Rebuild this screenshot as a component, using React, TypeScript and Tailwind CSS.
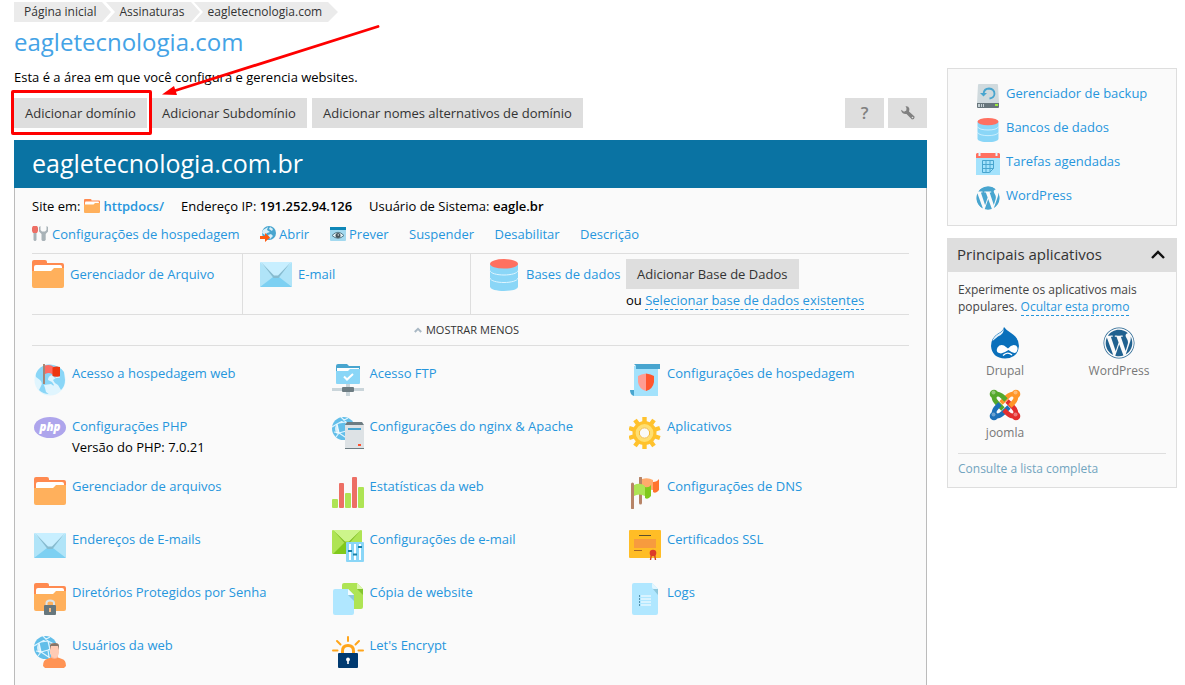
import type { ReactNode } from "react";
import { FaWordpress } from "react-icons/fa";

type IconProps = { className?: string };

function Svg({ children, className = "size-8" }: IconProps & { children: ReactNode }) {
  return (
    <svg viewBox="0 0 32 32" className={`shrink-0 ${className}`}>
      {children}
    </svg>
  );
}

const folderShapes = (
  <>
    <path d="M0 2Q0 0 2 0H13Q15 0 15 2V3H30Q32 3 32 5V14H0Z" fill="#ff8a50" />
    <path d="M2 7Q2 5 4 5H28Q30 5 30 7V12H2Z" fill="#fff" />
    <path d="M0 11H19L22 8H32V26Q32 28 30 28H2Q0 28 0 26Z" fill="#ffb05c" />
  </>
);

const FolderIcon = ({ className }: IconProps) => <Svg className={className}>{folderShapes}</Svg>;

const MailIcon = ({ className }: IconProps) => (
  <Svg className={className}>
    <rect y="3" width="32" height="25" rx="1" fill="#b0e4f8" />
    <path d="M0 3H32L17.500 19H14.500Z" fill="#c8efff" />
    <path d="M0 28L13 18H19L32 28Z" fill="#7dd0f2" />
    <path d="M1 3L14 16.500H18L31 3L18.500 19H13.500Z" fill="#87bcd0" />
  </Svg>
);

const DatabaseIcon = ({ className }: IconProps) => (
  <Svg className={className}>
    <path d="M2 5V27.500C2 33.500 30 33.500 30 27.500V5Z" fill="#8ad6f7" />
    <path d="M2 11.500C3 17.500 29 17.500 30 11.500M2 19C3 25 29 25 30 19" stroke="#dff5ff" strokeWidth="1" fill="none" />
    <ellipse cx="16" cy="4.800" rx="14" ry="4.800" fill="#ff7060" />
  </Svg>
);

const GlobeFlagIcon = () => (
  <Svg>
    <circle cx="16" cy="16" r="15.500" fill="#e0f5fe" />
    <path d="M4 6Q9 0 16 .5Q25 1 30 8L31 16Q31 22 27 26L24 21Q20 19 19 16Q22 13 26 14L24 11L21 14L18 11Q14 12 14 16L18 18L20 21L17 24L15 30Q9 30 5 26L7 22Q9 19 6 16L2 13Q1 10 4 6Z" fill="#8ad6f7" />
    <path d="M10 21L17 20L21 23L18 27L16 31L12 28L11 24Z" fill="#e0f5fe" />
    <path d="M11 1.500Q16 0 20 3L26 3V12Q21 14 18 10Q15 8 11 10Z" fill="#ff6b62" />
    <path d="M18.500 3.500Q22 2 26 3V12Q22 13 18.500 12Z" fill="#ed3711" />
    <path d="M10 0V20" stroke="#a77d68" strokeWidth="1.800" />
  </Svg>
);

const PhpIcon = () => (
  <Svg>
    <ellipse cx="16" cy="10.500" rx="16" ry="10.500" fill="#aea5ec" />
    <text x="16" y="13.500" textAnchor="middle" fill="#fff" fontFamily="Open Sans, sans-serif" fontSize="11.500" fontWeight="800" fontStyle="italic">
      php
    </text>
  </Svg>
);

const FolderLockIcon = () => (
  <Svg>
    {folderShapes}
    <path d="M12.500 23V20Q12.500 17.500 16 17.500Q20 17.500 20 20V23" stroke="#dce3e6" strokeWidth="2" fill="none" />
    <rect x="10" y="22" width="12" height="10" rx="1" fill="#67777d" />
    <path d="M15 25H17V29H15Z" fill="#f7bb83" />
  </Svg>
);

const netGlobe = (
  <>
    <circle cx="11.500" cy="11.500" r="11.500" fill="#62bee9" />
    <path d="M5 7L16 1M5 7L7 16L14 14L22 9M7 6L14 5L22 9M14 5L17 18M7 16L4 20M7 16L16 22M14 14L15 21M5 7L0 10M2 15L7 16M14 5L9 0" stroke="#dff5ff" strokeWidth="1.200" fill="none" />
    <path d="M5 7L7 16L5 17Q1 12 5 7Z" fill="#fff" opacity=".75" />
  </>
);

const WebUserIcon = () => (
  <Svg>
    {netGlobe}
    <path d="M17 15H24V23H17Z" fill="#ffb899" />
    <path d="M16 9Q16 7 20 7Q25 7 25 10V17Q24 22 20.500 22Q17 21 16 17Z" fill="#ffcbb4" />
    <path d="M16 14V9Q17 7 21 7Q25 7 25 10V14L24 10H17Z" fill="#85766b" />
    <path d="M9 30Q9 24 13 23L17 21.500Q20.500 24 24 21.500L28 23Q32 24 32 30L30 32H11Z" fill="#ff9354" />
  </Svg>
);

const FtpIcon = () => (
  <Svg>
    <path d="M4 2Q4 0 6 0H15L17 2H28V9H4Z" fill="#48a5cf" />
    <path d="M5 4H27V9H5Z" fill="#fff" />
    <path d="M4 7H16L18 5H28V19Q28 20 27 20H5Q4 20 4 19Z" fill="#8ad6f7" />
    <path d="M12 12.500L15 15.500L21 10" stroke="#fff" strokeWidth="2" fill="none" />
    <path d="M14 20H18V32H14ZM0 24H32V27H0Z" fill="#cad5da" />
    <rect x="10" y="23" width="12" height="5" rx="1" fill="#6d7c82" />
  </Svg>
);

const ServerGlobeIcon = () => (
  <Svg>
    {netGlobe}
    <path d="M13 8L15 5H30L32 8V32H13Z" fill="#6d7c82" />
    <path d="M13 8H32V31H13Z" fill="#dde2e5" />
    <path d="M16 11H29V13H16Z" fill="#48a5cf" />
    <path d="M26 27H29V29H26Z" fill="#ff512f" />
  </Svg>
);

const StatsIcon = () => (
  <Svg>
    <rect y="22" width="6" height="9" rx="1" fill="#aee454" />
    <rect x="7" y="6" width="5" height="25" rx="1" fill="#ed6f65" />
    <rect x="13" y="16" width="6" height="15" rx="1" fill="#aee454" />
    <rect x="20" width="5" height="31" rx="1" fill="#ed6f65" />
    <rect x="26" y="10" width="6" height="21" rx="1" fill="#aee454" />
  </Svg>
);

const MailSettingsIcon = () => (
  <Svg>
    <rect width="30" height="24" rx="1" fill="#aee454" />
    <path d="M1 0H29L18 11H12Z" fill="#cdf58b" />
    <path d="M1 24L12 13H18L29 24Z" fill="#80c91c" />
    <path d="M1 0L13.500 12H16.500L29 0L17 13.500H13Z" fill="#82bd29" />
    <rect x="14" y="12" width="18" height="20" rx="1" fill="#8ad6f7" />
    <path d="M18 14V30M23 14V30M28 14V30" stroke="#fff" strokeWidth="2" />
    <path d="M16 21H20M21 24.500H25M26 17H30" stroke="#1781a9" strokeWidth="2" />
  </Svg>
);

const CopyIcon = () => (
  <Svg>
    <path d="M10 2Q10 0 12 0H25L31 6V24Q31 26 29 26H12Q10 26 10 24Z" fill="#aee454" />
    <path d="M25 0L31 6H25Z" fill="#dcf7ae" />
    <path d="M25 6H31V12Z" fill="#83c62e" />
    <path d="M1 8Q1 6 3 6H16L22 12V30Q22 32 20 32H3Q1 32 1 30Z" fill="#b0e7ff" />
    <path d="M16 6L22 12H16Z" fill="#f2fbff" />
    <path d="M16 12H22V18Z" fill="#8cc7dc" />
  </Svg>
);

const EncryptIcon = () => (
  <Svg>
    <path d="M10.500 18V15Q10.500 9.500 16 9.500Q21.500 9.500 21.500 15V18" stroke="#ffa51b" strokeWidth="3" fill="none" />
    <path d="M16 1V5M5 5L8.500 8.500M27 5L23.500 8.500M1 14.500H5.500M26.500 14.500H31" stroke="#ffa51b" strokeWidth="2" strokeLinecap="round" />
    <rect x="6" y="17" width="20" height="15" rx="1" fill="#003a70" />
    <circle cx="16" cy="23.500" r="1.900" fill="#fff" />
    <path d="M15.200 24H16.800V28H15.200Z" fill="#fff" />
  </Svg>
);

const ScrollIcon = () => (
  <Svg>
    <path d="M5 2H29V32H5Z" fill="#a3e2fc" />
    <path d="M5 0H31V5H7V2Z" fill="#48a5cf" />
    <path d="M1 26H5V32Q1 31 1 26Z" fill="#48a5cf" />
    <path d="M17 9.500Q12 10 9 12V18Q10 25 17 27Z" fill="#ff9d93" />
    <path d="M17 9.500Q22 10 25 12V18Q24 25 17 27Z" fill="#ff562e" />
  </Svg>
);

const GearIcon = () => (
  <Svg>
    <path
      d="M15.500 0V32M0.100 11L30.900 21M0.100 21L30.900 11M6 3L25 29M25 3L6 29"
      stroke="#ffc22d"
      strokeWidth="4.400"
    />
    <circle cx="15.500" cy="16" r="12" fill="#ffc22d" />
    <circle cx="15.500" cy="16" r="7.300" fill="#fafafa" stroke="#ffdf70" strokeWidth="3.200" />
    <circle cx="15.500" cy="16" r="5.200" fill="#fafafa" stroke="#f5b629" strokeWidth="1" />
  </Svg>
);

const FlagsIcon = () => (
  <Svg>
    <path d="M11.500 1V26" stroke="#b78467" strokeWidth="3" strokeLinecap="round" />
    <path d="M13 2Q19 0 24 3V13Q18 13 13 9Z" fill="#ffab6c" />
    <path d="M24 5Q28 5 30 2V13Q27 17 24 15Z" fill="#ff742d" />
    <path d="M5 8Q11 5 16 9V19Q10 16 5 19Z" fill="#aee454" />
    <path d="M16 10Q20 11 22 8V19Q19 23 16 21Z" fill="#80c91c" />
    <path d="M3.500 7V31" stroke="#b78467" strokeWidth="3" strokeLinecap="round" />
  </Svg>
);

const CertificateIcon = () => (
  <Svg>
    <rect width="32" height="28" rx="1" fill="#ffbd26" />
    <path d="M10 5.500H22" stroke="#5d512c" strokeWidth="1" />
    <path d="M5 9H27V18H5Z" fill="#f79b3e" />
    <path d="M5 20.500H13" stroke="#a46426" strokeWidth="1" />
    <path d="M22.500 24L21.500 30M25.500 24L26.500 30" stroke="#d04026" strokeWidth="1.400" />
    <circle cx="24" cy="23" r="3.300" fill="#dd3b28" />
  </Svg>
);

const LogsIcon = () => (
  <Svg>
    <path d="M3 2Q3 0 5 0H23L29 6V30Q29 32 27 32H5Q3 32 3 30Z" fill="#b0e7ff" />
    <path d="M23 0L29 6H25Q23 6 23 4Z" fill="#e2f6ff" />
    <path d="M24 6H29V12Z" fill="#8cc7dc" />
    <path d="M12 13H22M12 16H22M12 19H22M12 22H22" stroke="#e5f7ff" strokeWidth="1.600" />
    <path d="M10.500 12V23" stroke="#5191ad" strokeWidth="1" strokeDasharray="2 1" />
  </Svg>
);

const BackupIcon = () => (
  <svg viewBox="0 0 24 24" className="size-6 shrink-0">
    <path d="M2 1Q2 0 3 0H21Q22 0 22 1L23 19H1Z" fill="#d0dade" />
    <path d="M1 19H23V23Q23 24 22 24H2Q1 24 1 23Z" fill="#68767c" />
    <path d="M7.500 10Q8 4.500 13 4.500Q18.500 5 18.500 10Q18 14 13.500 14.500" stroke="#48a5cf" strokeWidth="1.800" fill="none" />
    <path d="M4 9H11L7.500 12.500Z" fill="#48a5cf" />
    <path d="M2 20H4V23H2ZM5 20H6V23H5ZM7 20H8V23H7Z" fill="#c5d0d4" />
    <rect x="19" y="20" width="3" height="2" fill="#9bec3d" />
  </svg>
);

const CalendarIcon = () => (
  <svg viewBox="0 0 24 24" className="size-6 shrink-0">
    <path d="M0 2H24V23H0Z" fill="#a3e2fc" />
    <path d="M1 1H23L24 2V6H0V2Z" fill="#ff7060" />
    <path d="M3.500 0V4M20.500 0V4" stroke="#e2f6ff" strokeWidth="2" />
    <path d="M6.500 8.500H17.500V16.500L13.500 20.500H6.500ZM10 8.500V20.500M14 8.500V20.500M6.500 12.500H17.500M6.500 16.500H17.500" stroke="#48a5cf" strokeWidth="1" fill="none" />
  </svg>
);

const WordPressBadge = () => (
  <span className="flex size-6 shrink-0 items-center justify-center overflow-hidden rounded-full text-[#48a5cf]">
    <FaWordpress className="size-7 shrink-0" />
  </span>
);

const ToolsIcon = () => (
  <svg viewBox="0 0 16 16" className="size-4 shrink-0">
    <path d="M0 1.500L1 0H5L6 1.500V5L5 7H1L0 5Z" fill="#ed6f65" />
    <path d="M1.500 7H4.500V14L3.500 15H2.500L1.500 14Z" fill="#a8b2b7" />
    <path d="M7 1L8.500 0V4L10 5.500H13L14.500 4V0L16 1V5.500L13.700 8V14L12.500 15H10.500L9.500 14V8L7 5.500Z" fill="#a8b2b7" />
  </svg>
);

const OpenIcon = () => (
  <svg viewBox="0 0 16 16" className="size-4 shrink-0">
    <circle cx="9" cy="7" r="7" fill="#48a5cf" />
    <path d="M3 4L8 1L7 4L10 6L7 7L5 9L2 7ZM10 1L13 3L12 5L9 3ZM8 9L11 8L13 10L10 13Z" fill="#d9f0f9" />
    <path d="M0 10H5V7L10 11.500L5 16V13H0Z" fill="#ff5b10" />
  </svg>
);

const PreviewIcon = () => (
  <svg viewBox="0 0 16 16" className="size-4 shrink-0">
    <rect y="1" width="16" height="14" rx="1" fill="#a3d9ef" />
    <path d="M0 1H16V4H0Z" fill="#0e86b7" />
    <path d="M2 9.500Q8 3 14 9.500Q8 15 2 9.500Z" fill="#e6f4f8" stroke="#557a89" strokeWidth="1" />
    <circle cx="8" cy="9.500" r="2.500" fill="#45545b" />
    <circle cx="8.300" cy="8.900" r=".7" fill="#fff" />
  </svg>
);

const DrupalIcon = () => (
  <svg viewBox="0 0 32 32" className="size-8">
    <path d="M15 0Q17 3 22 6Q30 11 30 19Q29 31 16 31.500Q3 31 2 19Q2 11 9 6.500Q14 4 15 0Z" fill="#0a70bb" />
    <path d="M14.500 1.500Q15.500 7 9 9.500L3.500 14Q5 9 10 6.500Q14 4.500 14.500 1.500Z" fill="#e6f2fa" />
    <path d="M8.500 20.500Q11 17 15 18.500L19 21.500Q23 16.500 27 18.500Q30 21 27.500 25Q25 27.500 19.500 23Q16 25.500 12 26.500Q6 26 8.500 20.500Z" fill="#fff" />
    <path d="M14 28.500Q18.500 24 23 28" stroke="#fff" strokeWidth="1.400" fill="none" />
  </svg>
);

const JoomlaIcon = () => (
  <svg viewBox="0 0 32 32" className="size-8">
    <g fill="none" strokeWidth="4.600" strokeLinejoin="round">
      <path d="M5 6V8Q5 11 8 14L14 20" stroke="#54a82c" />
      <path d="M27 5H24Q21 5 18 8L12 14" stroke="#ff9528" />
      <path d="M27 27V24Q27 21 24 18L18 12" stroke="#e32e2d" />
      <path d="M5 27H8Q11 27 14 24L20 18" stroke="#1c70b8" />
      <path d="M5 5H8Q11 5 14 8L17 11" stroke="#54a82c" />
      <path d="M27 5V8Q27 11 24 14L21 17" stroke="#ff9528" />
      <path d="M27 27H24Q21 27 18 24L15 21" stroke="#e32e2d" />
      <path d="M5 27V24Q5 21 8 18L11 15" stroke="#1c70b8" />
    </g>
    <circle cx="5" cy="5" r="4.300" fill="#54a82c" />
    <circle cx="27" cy="5" r="4.300" fill="#ff9528" />
    <circle cx="27" cy="27" r="4.300" fill="#e32e2d" />
    <circle cx="5" cy="27" r="4.300" fill="#1c70b8" />
    <g fill="#fff" opacity=".35">
      <circle cx="4.500" cy="3.500" r="2" />
      <circle cx="26.500" cy="3.500" r="2" />
      <circle cx="26.500" cy="25.500" r="2" />
      <circle cx="4.500" cy="25.500" r="2" />
    </g>
  </svg>
);

type Feature = { icon: ReactNode; label: string; note?: string };

const features: Feature[][] = [
  [
    { icon: <GlobeFlagIcon />, label: "Acesso a hospedagem web" },
    { icon: <PhpIcon />, label: "Configurações PHP", note: "Versão do PHP: 7.0.21" },
    { icon: <FolderIcon />, label: "Gerenciador de arquivos" },
    { icon: <MailIcon />, label: "Endereços de E-mails" },
    { icon: <FolderLockIcon />, label: "Diretórios Protegidos por Senha" },
    { icon: <WebUserIcon />, label: "Usuários da web" },
  ],
  [
    { icon: <FtpIcon />, label: "Acesso FTP" },
    { icon: <ServerGlobeIcon />, label: "Configurações do nginx & Apache" },
    { icon: <StatsIcon />, label: "Estatísticas da web" },
    { icon: <MailSettingsIcon />, label: "Configurações de e-mail" },
    { icon: <CopyIcon />, label: "Cópia de website" },
    { icon: <EncryptIcon />, label: "Let's Encrypt" },
  ],
  [
    { icon: <ScrollIcon />, label: "Configurações de hospedagem" },
    { icon: <GearIcon />, label: "Aplicativos" },
    { icon: <FlagsIcon />, label: "Configurações de DNS" },
    { icon: <CertificateIcon />, label: "Certificados SSL" },
    { icon: <LogsIcon />, label: "Logs" },
  ],
];

const shortcuts: Feature[] = [
  { icon: <BackupIcon />, label: "Gerenciador de backup" },
  { icon: <DatabaseIcon className="size-6" />, label: "Bancos de dados" },
  { icon: <CalendarIcon />, label: "Tarefas agendadas" },
  { icon: <WordPressBadge />, label: "WordPress" },
];

const Link = ({ children, className = "" }: { children: ReactNode; className?: string }) => (
  <a href="#" className={`text-[#2696dd] ${className}`}>
    {children}
  </a>
);

const Button = ({ children, className = "" }: { children: ReactNode; className?: string }) => (
  <button className={`h-[30px] bg-[#dedede] text-left pl-[11px] text-[#333] ${className}`}>{children}</button>
);

function Breadcrumbs() {
  return (
    <nav className="flex h-5 text-xs leading-5 text-[#333]">
      <a className="w-[97px] bg-[#ebebeb] pl-2.5 [clip-path:polygon(0_0,88px_0,97px_50%,88px_100%,0_100%)]">Página inicial</a>
      <a className="-ml-[5px] w-[94px] bg-[#ebebeb] pl-[13.5px] [clip-path:polygon(0_0,85px_0,94px_50%,85px_100%,0_100%,9px_50%)]">Assinaturas</a>
      <a className="-ml-[6px] w-[144px] bg-[#ebebeb] pl-[13.5px] [clip-path:polygon(0_0,134px_0,144px_50%,134px_100%,0_100%,9px_50%)]">eagletecnologia.com</a>
    </nav>
  );
}

function DomainPanel() {
  return (
    <section className="mt-3 h-[545px]">
      <h2 className="h-12 bg-[#0a73a3] pl-[18px] text-[25px] leading-[46px] text-white">eagletecnologia.com.br</h2>
      <div className="h-[497px] border-x border-[#bbb] bg-[#fafafa] px-[17px] pt-2">
        <div className="flex h-5 items-center leading-5 text-black">
          <span className="flex w-[149px] items-center">
            Site em:
            <FolderIcon className="ml-1 mr-[3px] mt-px size-4" />
            <Link className="font-semibold">httpdocs/</Link>
          </span>
          <span className="w-[188px]">
            Endereço IP: <b className="font-semibold">191.252.94.126</b>
          </span>
          <span>
            Usuário de Sistema: <b className="font-semibold">eagle.br</b>
          </span>
        </div>
        <div className="mt-2 flex h-5 items-center leading-5">
          <Link className="flex w-[228px] items-center gap-1"><ToolsIcon />Configurações de hospedagem</Link>
          <Link className="flex w-[70px] items-center gap-[3px]"><OpenIcon />Abrir</Link>
          <Link className="flex w-[79px] items-center gap-[3px]"><PreviewIcon />Prever</Link>
          <Link className="w-[85.5px]">Suspender</Link>
          <Link className="w-[85.5px]">Desabilitar</Link>
          <Link>Descrição</Link>
        </div>

        <div className="mt-[9px] flex h-[62px] border-y border-[#dedede] leading-5">
          <div className="flex w-[211px] gap-1.5 border-r border-[#dedede]">
            <FolderIcon className="mt-1.5 size-8" />
            <Link className="mt-2.5">Gerenciador de Arquivo</Link>
          </div>
          <div className="flex w-[228px] gap-1.5 border-r border-[#dedede] pl-[17px]">
            <MailIcon className="mt-[5px] size-8" />
            <Link className="mt-2.5">E-mail</Link>
          </div>
          <div className="flex gap-1.5 whitespace-nowrap pl-[17px]">
            <DatabaseIcon className="mt-[5px] size-8" />
            <Link className="mt-2.5 w-[94px]">Bases de dados</Link>
            <div className="text-black">
              <Button className="mt-[5px] block w-[173px]">Adicionar Base de Dados</Button>
              <div className="mt-px">
                ou <Link className="border-b border-dashed border-[#2696dd]">Selecionar base de dados existentes</Link>
              </div>
            </div>
          </div>
        </div>

        <div className="flex h-[31px] items-center justify-center border-b border-[#dedede] pr-[8px] text-[11px] font-medium tracking-[0.03px] text-[#333]">
          <svg viewBox="0 0 8 6" className="mr-1 h-1.5 w-2">
            <path d="M.8 5L4 1.800L7.200 5" stroke="#a9b8c4" strokeWidth="2" fill="none" />
          </svg>
          MOSTRAR MENOS
        </div>

        <div className="flex pl-0.5 pt-[18px] leading-5">
          {features.map((column, i) => (
            <div key={i} className="w-[297.5px] shrink-0 last:w-[280px]">
              {column.map((f, row) => (
                <div key={f.label} className={`flex gap-1.5 ${row === 1 ? "h-[60px]" : "h-[53px]"}`}>
                  {f.icon}
                  <div className="-mt-px">
                    <Link>{f.label}</Link>
                    {f.note && <div className="mt-px text-black">{f.note}</div>}
                  </div>
                </div>
              ))}
            </div>
          ))}
        </div>
      </div>
    </section>
  );
}

function Sidebar() {
  return (
    <aside className="w-[230px] pt-[68px]">
      <div className="flex h-[158px] flex-col gap-2.5 border border-[#dedede] bg-[#fafafa] pl-7 pt-[15px]">
        {shortcuts.map((s) => (
          <div key={s.label} className="flex h-6 gap-1.5 leading-5">
            {s.icon}
            <Link className="-mt-px">{s.label}</Link>
          </div>
        ))}
      </div>

      <div className="mt-3 h-[250px] border border-[#dedede] bg-[#fafafa]">
        <h3 className="-mx-px -mt-px flex h-[34px] items-center justify-between bg-[#dedede] pl-2.5 pr-3 text-[15px] text-[#333]">
          <span className="-mt-0.5">Principais aplicativos</span>
          <svg viewBox="0 0 14 9" className="-mt-0.5 h-[9px] w-3.5">
            <path d="M1 8L7 2L13 8" stroke="#111" strokeWidth="2.400" fill="none" />
          </svg>
        </h3>
        <div className="mx-2.5 pt-[9px] text-xs text-[#444]">
          <p className="whitespace-nowrap leading-[17px]">
            Experimente os aplicativos mais
            <br />
            populares. <Link className="border-b border-dashed border-[#2696dd]">Ocultar esta promo</Link>
          </p>
          <ul className="-mx-2.5 mt-[12px] grid h-[126px] grid-cols-2 grid-rows-[62px_62px] text-center leading-5 text-[#777]">
            <li className="flex flex-col items-center"><DrupalIcon /><span className="mt-0.5">Drupal</span></li>
            <li className="flex flex-col items-center"><FaWordpress className="size-8 text-[#20618f]" /><span className="mt-0.5">WordPress</span></li>
            <li className="flex flex-col items-center"><JoomlaIcon /><span className="mt-0.5">joomla</span></li>
          </ul>
          <div className="border-t border-[#dedede] pt-[5px] leading-5 text-[#72a5c0]">Consulte a lista completa</div>
        </div>
      </div>
    </aside>
  );
}

export default function App() {
  return (
    <div className="relative flex h-[685px] w-[1185px] gap-5 overflow-hidden bg-white pl-3.5 text-[13px] font-[Open_Sans,sans-serif]">
      <main className="w-[913px] pt-0.5">
        <Breadcrumbs />
        <h1 className="h-[45px] pt-0.5 text-2xl leading-9 text-[#44a3e6]">eagletecnologia.com</h1>
        <p className="h-[31px] leading-5 text-black">Esta é a área em que você configura e gerencia websites.</p>
        <div className="flex gap-[5px]">
          <Button className="w-[133px] pt-0.5">Adicionar domínio</Button>
          <Button className="w-[155px] pt-0.5 !pl-2.5">Adicionar Subdomínio</Button>
          <Button className="w-[271px] pt-0.5">Adicionar nomes alternativos de domínio</Button>
          <Button className="ml-auto flex w-[39px] items-center justify-center !pl-0 text-[17px] font-semibold !text-[#808080]">?</Button>
          <Button className="-ml-px flex w-[39px] items-center justify-center !pl-0">
            <svg viewBox="0 0 14 14" className="size-3.5">
              <path d="M4.500.3Q7.500-.2 8.300 2.500Q8.500 4 8 5.500L13.500 10.500Q14 13.500 11 13.500L5.500 8Q1.500 8.500 .3 5L.2 3.800L3 5.800L5.300 4.500L5.500 2Z" fill="#808080" />
              <circle cx="11.500" cy="11.500" r=".8" fill="#dedede" />
            </svg>
          </Button>
        </div>
        <DomainPanel />
      </main>
      <Sidebar />
      <div className="pointer-events-none absolute left-[11px] top-[90px] h-[45px] w-[141px] rounded-[2px] border-[3px] border-[#fe0000]" />
      <svg className="pointer-events-none absolute left-[155px] top-5 h-20 w-[230px]" viewBox="155 20 230 80">
        <path d="M378 26.500L174 91" stroke="#fe0000" strokeWidth="2.800" strokeLinecap="round" />
        <path d="M162 94.500L174 86L177 95Z" fill="#fe0000" />
      </svg>
    </div>
  );
}
